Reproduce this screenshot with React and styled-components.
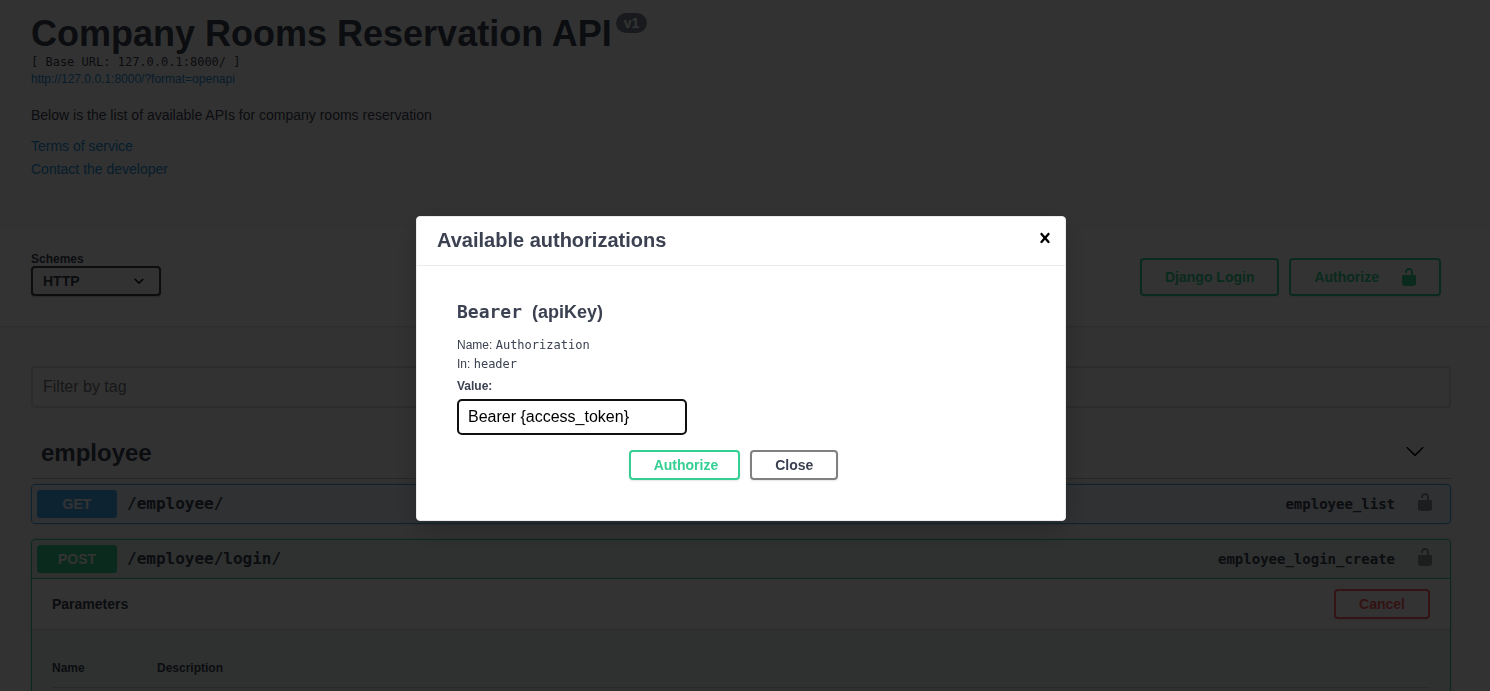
import React from "react";
import styled, { createGlobalStyle, css } from "styled-components";

const sans = '"Liberation Sans", Arial, sans-serif';
const mono = '"DejaVu Sans Mono", monospace';
const ink = "#3b4151";

const GlobalStyle = createGlobalStyle`
  *, *::before, *::after { box-sizing: border-box; }
  body {
    margin: 0;
    background: #fafafa;
    color: ${ink};
    font-family: ${sans};
    overflow: hidden;
  }
  h1, h2, h3, h4, p { margin: 0; }
  button, input, select { font-family: ${sans}; }
`;

const Page = styled.div`
  height: 100vh;
  overflow: hidden;
`;

const Wrapper = styled.div`
  max-width: 1490px;
  margin: 0 auto;
  padding: 0 39px 0 31px;
`;

const Info = styled.header`
  display: flex;
  flex-direction: column;
  align-items: flex-start;
  height: 228px;
  padding-top: 13px;
`;

const TitleRow = styled.div`
  display: flex;
  align-items: flex-start;
  gap: 4px;
`;

const Title = styled.h1`
  font-size: 36px;
  line-height: 41px;
`;

const Version = styled.span`
  padding: 0 8px;
  border-radius: 10px;
  background: #7d8492;
  color: #fff;
  font-size: 14px;
  font-weight: 700;
  line-height: 20px;
`;

const BaseUrl = styled.code`
  font-family: ${mono};
  font-size: 12px;
  line-height: 16px;
`;

const InfoLink = styled.a`
  color: #2491d9;
  font-size: ${(p) => (p.$small ? 12 : 14)}px;
  line-height: ${(p) => (p.$small ? 18 : 23)}px;
  text-decoration: none;
`;

const Summary = styled.p`
  margin: 19px 0 12px;
  font-size: 14px;
  line-height: 16px;
`;

const SchemeBar = styled.section`
  background: #fff;
  box-shadow: 0 1px 2px rgba(0, 0, 0, 0.15);
`;

const SchemeInner = styled(Wrapper)`
  display: flex;
  align-items: flex-end;
  justify-content: space-between;
  height: 98px;
  padding-bottom: 30px;
`;

const SchemeLabel = styled.label`
  display: flex;
  flex-direction: column;
  font-size: 12px;
  font-weight: 700;
  line-height: 14px;
`;

const SelectBox = styled.span`
  display: grid;
  align-items: center;
  width: 130px;
  > * { grid-area: 1 / 1; }
  > svg {
    justify-self: end;
    margin-right: 12px;
    color: #000;
    pointer-events: none;
  }
`;

const Select = styled.select`
  appearance: none;
  width: 100%;
  height: 30px;
  padding: 0 10px;
  border: 2px solid #41444e;
  border-radius: 4px;
  background: #f7f7f7;
  box-shadow: 0 1px 2px rgba(0, 0, 0, 0.25);
  color: ${ink};
  font-size: 14px;
  font-weight: 700;
`;

const Actions = styled.div`
  display: flex;
  gap: 10px;
  margin-right: 10px;
`;

const tones = {
  plain: css`border-color: #808080; color: ${ink};`,
  green: css`border-color: #35cf93; color: #35cf93;`,
  red: css`border-color: #ff6060; color: #ff6060;`,
};

const Button = styled.button`
  display: flex;
  align-items: center;
  justify-content: space-between;
  gap: 20px;
  height: ${(p) => (p.$tall ? 38 : 30)}px;
  padding: 0 ${(p) => (p.$trim ? 20 : 23)}px 0 23px;
  border: 2px solid;
  border-radius: 4px;
  background: transparent;
  box-shadow: 0 1px 2px rgba(0, 0, 0, 0.1);
  font-size: 14px;
  font-weight: 700;
  line-height: 16px;
  ${(p) => tones[p.$tone]}
`;

const Icon = styled.svg`
  display: block;
  flex: none;
  width: 20px;
  height: 20px;
  fill: currentColor;
`;

const Filter = styled.input`
  display: block;
  width: 100%;
  height: 42px;
  margin: 40px 0 20px;
  padding: 0 10px;
  border: 2px solid #d8dde7;
  border-radius: 4px;
  background: transparent;
  font-size: 16px;
  &::placeholder { color: #757575; }
`;

const TagHeader = styled.div`
  display: flex;
  align-items: center;
  justify-content: space-between;
  height: 51px;
  margin-bottom: 5px;
  padding: 0 26px 0 10px;
  border-bottom: 1px solid rgba(59, 65, 81, 0.3);
`;

const TagName = styled.h2`
  font-size: 24px;
  line-height: 28px;
`;

const IconButton = styled.button`
  display: block;
  padding: 0 0 4px;
  border: 0;
  background: none;
  color: ${(p) => (p.$muted ? "rgba(0, 0, 0, 0.4)" : "#000")};
`;

const verbs = {
  GET: { color: "#45b0f8", tint: "rgba(97, 175, 254, 0.1)" },
  POST: { color: "#35cf93", tint: "rgba(73, 204, 144, 0.1)" },
};

const Operation = styled.section`
  margin-bottom: 15px;
  border: 1px solid ${(p) => verbs[p.$verb].color};
  border-radius: 4px;
  background: ${(p) => verbs[p.$verb].tint};
  box-shadow: 0 0 3px rgba(0, 0, 0, 0.19);
`;

const OperationHead = styled.div`
  display: flex;
  align-items: center;
  height: 38px;
  padding: 0 15px 0 5px;
`;

const Method = styled.span`
  width: 80px;
  border-radius: 3px;
  background: ${(p) => verbs[p.$verb].color};
  color: #fff;
  font-size: 14px;
  font-weight: 700;
  line-height: 28px;
  text-align: center;
  text-shadow: 0 1px 0 rgba(0, 0, 0, 0.1);
`;

const Path = styled.span`
  flex: 1;
  padding: 0 10px;
  font-family: ${mono};
  font-size: 16px;
  font-weight: 700;
  line-height: 20px;
`;

const OperationId = styled.span`
  margin-right: 20px;
  font-family: ${mono};
  font-size: 14px;
  font-weight: 700;
  line-height: 20px;
`;

const SectionHead = styled.div`
  display: flex;
  align-items: center;
  justify-content: space-between;
  height: 51px;
  padding: 0 20px;
  border-top: 1px solid #35cf93;
  background: rgba(255, 255, 255, 0.9);
  box-shadow: 0 1px 2px rgba(0, 0, 0, 0.1);
`;

const SectionTitle = styled.h3`
  font-size: 14px;
  line-height: 16px;
`;

const TableBox = styled.div`
  padding: 20px;
`;

const Table = styled.table`
  width: 100%;
  border-collapse: collapse;
`;

const HeadCell = styled.th`
  width: ${(p) => (p.$first ? "105px" : "auto")};
  padding: 12px 0;
  border-bottom: 1px solid rgba(59, 65, 81, 0.2);
  font-size: 12px;
  line-height: 14px;
  text-align: left;
`;

const Backdrop = styled.div`
  position: fixed;
  inset: 0;
  display: flex;
  align-items: center;
  justify-content: center;
  padding: 46px 8px 0 0;
  background: rgba(0, 0, 0, 0.8);
`;

const Dialog = styled.div`
  width: 100%;
  max-width: 650px;
  border: 1px solid #ebebeb;
  border-radius: 4px;
  background: #fff;
  box-shadow: 0 10px 30px rgba(0, 0, 0, 0.2);
`;

const DialogHead = styled.div`
  display: flex;
  align-items: center;
  justify-content: space-between;
  height: 49px;
  padding: 0 10px 2px 20px;
  border-bottom: 1px solid #ebebeb;
`;

const DialogTitle = styled.h3`
  font-size: 20px;
  line-height: 24px;
`;

const AuthForm = styled.form`
  padding: 35px 40px 40px;
`;

const AuthTitle = styled.h4`
  display: flex;
  gap: 10px;
  margin-bottom: 13px;
  font-size: 18px;
  line-height: 22px;
`;

const Mono = styled.code`
  font-family: ${mono};
`;

const AuthText = styled.p`
  font-size: 12px;
  line-height: 19px;
`;

const ValueLabel = styled.label`
  display: block;
  margin: 5px 0 6px;
  font-size: 12px;
  font-weight: 700;
  line-height: 14px;
`;

const ValueInput = styled.input`
  display: block;
  width: 230px;
  height: 36px;
  padding: 0 9px;
  border: 2px solid #101010;
  border-radius: 5px;
  outline: none;
  background: #fff;
  color: #000;
  font-size: 16px;
`;

const DialogButtons = styled.div`
  display: flex;
  justify-content: center;
  gap: 10px;
  margin-top: 15px;
  padding-right: 15px;
`;

function Glyph({ d }) {
  return (
    <Icon viewBox="0 0 20 20" aria-hidden="true">
      <path d={d} />
    </Icon>
  );
}

const UNLOCKED =
  "M15.8 8H14V5.6C14 2.703 12.665 1 10 1 7.334 1 6 2.703 6 5.6V6h2v-.801C8 3.754 8.797 3 10 3c1.203 0 2 .754 2 2.199V8H4c-.553 0-1 .646-1 1.199V17c0 .549.428 1.139.951 1.307l1.197.387C5.672 18.861 6.55 19 7.1 19h5.8c.549 0 1.428-.139 1.951-.307l1.196-.387c.524-.167.953-.757.953-1.306V9.199C17 8.646 16.352 8 15.8 8z";
const CROSS =
  "M14.348 14.849c-.469.469-1.229.469-1.697 0L10 11.819l-2.651 3.029c-.469.469-1.229.469-1.697 0-.469-.469-.469-1.229 0-1.697l2.758-3.15-2.759-3.152c-.469-.469-.469-1.228 0-1.697.469-.469 1.228-.469 1.697 0L10 8.183l2.651-3.031c.469-.469 1.228-.469 1.697 0 .469.469.469 1.229 0 1.697l-2.758 3.152 2.758 3.15c.469.469.469 1.229 0 1.698z";
const LARGE_ARROW =
  "M17.418 6.109c.272-.268.709-.268.979 0s.271.701 0 .969l-7.908 7.83c-.27.268-.707.268-.979 0l-7.908-7.83c-.27-.268-.27-.701 0-.969.271-.268.709-.268.979 0L10 13.25l7.418-7.141z";
const SMALL_ARROW =
  "M13.418 7.859c.271-.268.709-.268.978 0 .27.268.272.701 0 .969l-3.908 3.83c-.27.268-.707.268-.979 0l-3.908-3.83c-.27-.267-.27-.701 0-.969.271-.268.709-.268.978 0L10 11l3.418-3.141z";

function OperationBlock({ verb, path, id, children }) {
  return (
    <Operation $verb={verb}>
      <OperationHead>
        <Method $verb={verb}>{verb}</Method>
        <Path>{path}</Path>
        <OperationId>{id}</OperationId>
        <IconButton $muted aria-label={`Authorize ${id}`}>
          <Glyph d={UNLOCKED} />
        </IconButton>
      </OperationHead>
      {children}
    </Operation>
  );
}

export default function App() {
  return (
    <>
      <GlobalStyle />
      <Page>
        <Wrapper>
          <Info>
            <TitleRow>
              <Title>Company Rooms Reservation API</Title>
              <Version>v1</Version>
            </TitleRow>
            <BaseUrl>[ Base URL: 127.0.0.1:8000/ ]</BaseUrl>
            <InfoLink $small href="#openapi">http://127.0.0.1:8000/?format=openapi</InfoLink>
            <Summary>Below is the list of available APIs for company rooms reservation</Summary>
            <InfoLink href="#terms">Terms of service</InfoLink>
            <InfoLink href="#contact">Contact the developer</InfoLink>
          </Info>
        </Wrapper>

        <SchemeBar>
          <SchemeInner>
            <SchemeLabel htmlFor="scheme">
              Schemes
              <SelectBox>
                <Select id="scheme" defaultValue="http">
                  <option value="http">HTTP</option>
                </Select>
                <Glyph d={SMALL_ARROW} />
              </SelectBox>
            </SchemeLabel>
            <Actions>
              <Button $tone="green" $tall>Django Login</Button>
              <Button $tone="green" $tall $trim>
                Authorize
                <Glyph d={UNLOCKED} />
              </Button>
            </Actions>
          </SchemeInner>
        </SchemeBar>

        <Wrapper>
          <Filter type="text" placeholder="Filter by tag" aria-label="Filter by tag" />
          <TagHeader>
            <TagName>employee</TagName>
            <IconButton aria-label="Collapse employee">
              <Glyph d={LARGE_ARROW} />
            </IconButton>
          </TagHeader>
          <OperationBlock verb="GET" path="/employee/" id="employee_list" />
          <OperationBlock verb="POST" path="/employee/login/" id="employee_login_create">
            <SectionHead>
              <SectionTitle>Parameters</SectionTitle>
              <Button $tone="red">Cancel</Button>
            </SectionHead>
            <TableBox>
              <Table>
                <thead>
                  <tr>
                    <HeadCell $first>Name</HeadCell>
                    <HeadCell>Description</HeadCell>
                  </tr>
                </thead>
              </Table>
            </TableBox>
          </OperationBlock>
        </Wrapper>
      </Page>

      <Backdrop>
        <Dialog role="dialog" aria-modal="true" aria-labelledby="auth-title">
          <DialogHead>
            <DialogTitle id="auth-title">Available authorizations</DialogTitle>
            <IconButton aria-label="Close dialog">
              <Glyph d={CROSS} />
            </IconButton>
          </DialogHead>
          <AuthForm onSubmit={(e) => e.preventDefault()}>
            <AuthTitle>
              <Mono>Bearer</Mono>
              <span>(apiKey)</span>
            </AuthTitle>
            <AuthText>Name: <Mono>Authorization</Mono></AuthText>
            <AuthText>In: <Mono>header</Mono></AuthText>
            <ValueLabel htmlFor="token">Value:</ValueLabel>
            <ValueInput id="token" type="text" defaultValue="Bearer {access_token}" />
            <DialogButtons>
              <Button type="submit" $tone="green" $trim>Authorize</Button>
              <Button type="button" $tone="plain">Close</Button>
            </DialogButtons>
          </AuthForm>
        </Dialog>
      </Backdrop>
    </>
  );
}
